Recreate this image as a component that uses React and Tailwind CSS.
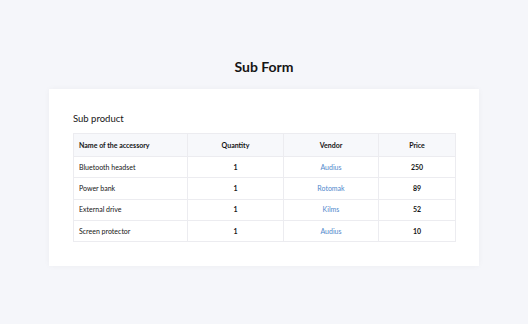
const rows = [
  { name: "Bluetooth headset", qty: 1, vendor: "Audius", price: 250 },
  { name: "Power bank", qty: 1, vendor: "Rotomak", price: 89 },
  { name: "External drive", qty: 1, vendor: "Kilms", price: 52 },
  { name: "Screen protector", qty: 1, vendor: "Audius", price: 10 },
];

export default function App() {
  return (
    <div className="min-h-[324px] w-[528px] bg-[#f5f6fa] pt-[58px] font-['Lato',sans-serif] text-[#151515]">
      <h1 className="text-center text-[14px] font-bold leading-[18px]">Sub Form</h1>
      <div className="mx-[49px] mt-[13px] h-[177px] bg-white px-6 pt-[24px] shadow-[0_0_6px_rgba(0,0,0,0.04)]">
        <p className="text-[9.5px] leading-[12px]">Sub product</p>
        <table className="mt-[8px] w-[382px] table-fixed border-collapse text-[7px]">
          <colgroup>
            <col className="w-[114px]" />
            <col className="w-[96px]" />
            <col className="w-[95px]" />
            <col className="w-[77px]" />
          </colgroup>
          <thead>
            <tr className="h-[23px] bg-[#f7f8fb]">
              <th className="border border-[#ececf0] pl-[5px] text-left font-bold">Name of the accessory</th>
              <th className="border border-[#ececf0] text-center font-bold">Quantity</th>
              <th className="border border-[#ececf0] text-center font-bold">Vendor</th>
              <th className="border border-[#ececf0] text-center font-bold">Price</th>
            </tr>
          </thead>
          <tbody>
            {rows.map((r) => (
              <tr key={r.name} className="h-[21.25px]">
                <td className="border border-[#ececf0] pl-[5px]">{r.name}</td>
                <td className="border border-[#ececf0] text-center font-bold">{r.qty}</td>
                <td className="border border-[#ececf0] text-center text-[#5088cc]">{r.vendor}</td>
                <td className="border border-[#ececf0] text-center font-bold">{r.price}</td>
              </tr>
            ))}
          </tbody>
        </table>
      </div>
    </div>
  );
}
